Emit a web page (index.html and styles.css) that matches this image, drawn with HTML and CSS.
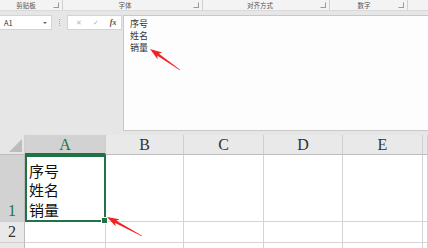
FILE: index.html
```html
<!DOCTYPE html>
<html lang="zh-CN">
<head>
  <meta charset="UTF-8"/>
  <title>Sheet</title>
  <link rel="stylesheet" href="styles.css">
</head>
<body>
<div class="app">
  <div class="ribbon">
    <div class="group g-clip"><span class="group-label">剪贴板</span><span class="launcher"></span></div>
    <div class="group g-font"><span class="group-label">字体</span><span class="launcher"></span></div>
    <div class="group g-align"><span class="group-label">对齐方式</span><span class="launcher"></span></div>
    <div class="group g-num"><span class="group-label">数字</span><span class="launcher"></span></div>
    <div class="group g-rest"></div>
  </div>

  <div class="formula-row">
    <div class="name-box"><span>A1</span><span class="caret"></span></div>
    <div class="grip"></div>
    <div class="fx-buttons">
      <span class="fx-btn">✕</span>
      <span class="fx-btn">✓</span>
      <span class="fx-btn fx-label">fx</span>
    </div>
    <div class="formula-input">
      <div class="line">序号</div>
      <div class="line">姓名</div>
      <div class="line">销量</div>
    </div>
  </div>

  <div class="sheet">
    <div class="corner"><span class="corner-tri"></span></div>
    <div class="col-head active">A</div>
    <div class="col-head">B</div>
    <div class="col-head">C</div>
    <div class="col-head">D</div>
    <div class="col-head">E</div>
    <div class="col-head"></div>

    <div class="row-head active">1</div>
    <div class="cell selected">
      <div class="line">序号</div>
      <div class="line">姓名</div>
      <div class="line">销量</div>
      <span class="fill-handle"></span>
    </div>
    <div class="cell"></div>
    <div class="cell"></div>
    <div class="cell"></div>
    <div class="cell"></div>
    <div class="cell"></div>

    <div class="row-head">2</div>
    <div class="cell"></div>
    <div class="cell"></div>
    <div class="cell"></div>
    <div class="cell"></div>
    <div class="cell"></div>
    <div class="cell"></div>

    <div class="row-head"></div>
    <div class="cell"></div>
    <div class="cell"></div>
    <div class="cell"></div>
    <div class="cell"></div>
    <div class="cell"></div>
    <div class="cell"></div>
  </div>

  <svg class="arrows" width="428" height="248" viewBox="0 0 428 248">
    <g transform="translate(150 49) rotate(35)">
      <polygon points="0,0 12,-4 10,-1.3 36.6,-0.3 36.6,0.3 10,1.3 12,4"/>
    </g>
    <g transform="translate(107 217) rotate(28.5)">
      <polygon points="0,0 12,-4 10,-1.3 39.8,-0.3 39.8,0.3 10,1.3 12,4"/>
    </g>
  </svg>
</div>
</body>
</html>
```

FILE: styles.css
```css
body {
  margin: 0;
  padding: 0;
  background: #e6e6e6;
  font-family: "Noto Sans CJK SC", "Noto Sans", sans-serif;
  overflow: hidden;
}

.app {
  width: 428px;
  height: 248px;
  position: relative;
  overflow: hidden;
  background: #e6e6e6;
}

/* ribbon group captions */
.ribbon {
  display: flex;
  height: 11px;
  background: #f3f3f3;
  border-bottom: 1px solid #dadada;
  box-sizing: border-box;
}

.group {
  display: flex;
  align-items: center;
  border-right: 1px solid #d0d0d0;
  box-sizing: border-box;
  height: 10px;
}

.group-label {
  font-size: 6.5px;
  color: #555;
  text-align: center;
  line-height: 10px;
}

.launcher {
  width: 4px;
  height: 4px;
  border: 1px solid #9a9a9a;
  border-left-color: transparent;
  border-top-color: transparent;
  margin-left: auto;
  margin-right: 3px;
}

.g-clip { width: 63px; }
.g-clip .group-label { width: 52px; }
.g-font { width: 140px; }
.g-font .group-label { width: 124px; }
.g-align { width: 127px; }
.g-align .group-label { width: 114px; }
.g-num { width: 78px; }
.g-num .group-label { width: 68px; }
.g-rest { flex: 1; border-right: none; }

/* name box + formula bar */
.formula-row {
  display: flex;
  align-items: flex-start;
  padding-top: 4px;
  height: 124px;
  box-sizing: border-box;
}

.name-box {
  width: 52px;
  height: 15px;
  background: #fff;
  border: 1px solid #d4d4d4;
  border-left: none;
  box-sizing: border-box;
  display: flex;
  align-items: center;
  padding: 0 4px;
  font-size: 7.5px;
  color: #333;
}

.caret {
  margin-left: auto;
  width: 0;
  height: 0;
  border-left: 2px solid transparent;
  border-right: 2px solid transparent;
  border-top: 2px solid #666;
}

.grip {
  width: 15px;
  height: 15px;
  display: flex;
  justify-content: center;
  align-items: center;
}

.grip::before {
  content: "";
  width: 1px;
  height: 8px;
  background: repeating-linear-gradient(#aaa 0 1px, transparent 1px 2px);
}

.fx-buttons {
  width: 55px;
  height: 15px;
  background: #fff;
  border: 1px solid #d4d4d4;
  box-sizing: border-box;
  display: flex;
  align-items: center;
  gap: 11px;
  padding-left: 8px;
}

.fx-btn {
  font-family: "DejaVu Sans", sans-serif;
  font-size: 7px;
  color: #b4b4b4;
}

.fx-label {
  font-family: "Liberation Serif", serif;
  font-style: italic;
  font-weight: bold;
  font-size: 8px;
  color: #555;
}

.formula-input {
  flex: 1;
  margin-left: 1px;
  height: 116px;
  background: #fdfdfd;
  border: 1px solid #c8c8c8;
  border-right: none;
  box-sizing: border-box;
  padding: 2px 6px;
  font-size: 9px;
  color: #333;
}

.formula-input .line {
  height: 12px;
  line-height: 12px;
  overflow: hidden;
}

/* sheet grid */
.sheet {
  display: grid;
  grid-template-columns: 25px 81px 78px 80px 79px 80px 1fr;
  grid-template-rows: 20px 67px 21px 21px;
  background: #fff;
}

.corner {
  background: #e6e6e6;
  border-right: 1px solid #d0d0d0;
  border-bottom: 1px solid #bdbdbd;
  box-sizing: border-box;
  position: relative;
}

.corner-tri {
  position: absolute;
  right: 2px;
  bottom: 2px;
  width: 0;
  height: 0;
  border-left: 13px solid transparent;
  border-bottom: 13px solid #bcbcbc;
}

.col-head {
  background: #e9e9e9;
  border-right: 1px solid #cfcfcf;
  border-bottom: 1px solid #bdbdbd;
  box-sizing: border-box;
  text-align: center;
  font-family: "Liberation Serif", serif;
  font-size: 16px;
  line-height: 19px;
  color: #333;
}

.col-head.active {
  background: #d2d2d2;
  border-bottom: 2px solid #217346;
  color: #217346;
}

.row-head {
  background: #e9e9e9;
  border-right: 1px solid #bdbdbd;
  border-bottom: 1px solid #cfcfcf;
  box-sizing: border-box;
  display: flex;
  align-items: flex-end;
  justify-content: center;
  font-family: "Liberation Serif", serif;
  font-size: 16px;
  line-height: 20px;
  color: #333;
}

.row-head.active {
  background: #d2d2d2;
  color: #217346;
}

.cell {
  border-right: 1px solid #d4d4d4;
  border-bottom: 1px solid #d4d4d4;
  box-sizing: border-box;
}

.cell.selected {
  position: relative;
  border: 2px solid #217346;
  display: flex;
  flex-direction: column;
  justify-content: flex-end;
  padding: 0 0 1px 2px;
  font-size: 15px;
  color: #111;
}

.cell.selected .line {
  height: 19.5px;
  line-height: 19.5px;
  overflow: hidden;
}

.fill-handle {
  position: absolute;
  right: -4px;
  bottom: -4px;
  width: 5px;
  height: 5px;
  background: #217346;
  border: 1px solid #fff;
}

.arrows {
  position: absolute;
  left: 0;
  top: 0;
  pointer-events: none;
  fill: #f02222;
}
```
